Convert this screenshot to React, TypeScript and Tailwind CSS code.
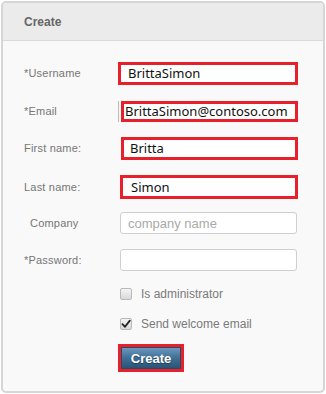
import React from "react";

const labelCls =
  "text-[11px] text-[#767676] leading-none tracking-[0.2px]";
const font = { fontFamily: '"Liberation Sans", Arial, sans-serif' };

function Label({ text, pl = "pl-[21px]" }: { text: string; pl?: string }) {
  return (
    <div className={`w-[115px] shrink-0 ${pl} ${labelCls}`} style={font}>
      {text}
    </div>
  );
}

function RedInput({ value, cls, textPl }: { value: string; cls: string; textPl: string }) {
  return (
    <div className={`border-[3px] border-[#e8202b] bg-white flex items-center overflow-hidden ${cls}`}>
      <span
        className={`${textPl} text-[13px] text-[#111] leading-none whitespace-nowrap`}
        style={{ fontFamily: '"Noto Sans", "Open Sans", sans-serif' }}
      >
        {value}
      </span>
    </div>
  );
}

function PlainInput({ placeholder }: { placeholder?: string }) {
  return (
    <div className="ml-[2px] w-[177px] h-[22px] rounded-[3px] border border-[#cfcfcf] bg-white flex items-center">
      {placeholder && (
        <span className="pl-[7px] text-[13px] text-[#a9a9a9] leading-none" style={{ fontFamily: '"Liberation Sans", Arial, sans-serif' }}>
          {placeholder}
        </span>
      )}
    </div>
  );
}

function Checkbox({ checked, label }: { checked?: boolean; label: string }) {
  return (
    <div className="flex items-center h-[12px]">
      <div className="w-[115px] shrink-0" />
      <div className="ml-[2px] w-[12px] h-[12px] rounded-[2px] border border-[#b9b9b9] bg-gradient-to-b from-[#f4f4f4] to-[#d9d9d9] flex items-center justify-center">
        {checked && (
          <svg width="10" height="10" viewBox="0 0 10 10">
            <path d="M1.5 5.2 L4 7.8 L8.8 1.6" fill="none" stroke="#222" strokeWidth="1.8" strokeLinecap="round" strokeLinejoin="round" />
          </svg>
        )}
      </div>
      <span className="ml-[9px] text-[12px] text-[#7a7a7a] leading-none" style={font}>
        {label}
      </span>
    </div>
  );
}

export default function App() {
  return (
    <div className="w-[326px] h-[394px] bg-white p-[1px]">
      <div className="w-[324px] h-[392px] border-2 border-[#d6d6d6] rounded-[5px] bg-[#f9f9f9] overflow-hidden flex flex-col">
        <div className="h-[38px] shrink-0 bg-[#ebebeb] border-b border-[#dadada] flex items-center pl-[21px]">
          <span className="text-[12px] font-bold text-[#666]" style={font}>
            Create
          </span>
        </div>
        <div className="flex flex-col">
          <div className="mt-[21px] flex items-center h-[23px]">
            <Label text="*Username" />
            <RedInput value="BrittaSimon" cls="w-[180px] h-[23px]" textPl="pl-[7px]" />
          </div>
          <div className="mt-[16px] flex items-center h-[21px]">
            <Label text="*Email" />
            <div className="w-[1px] h-[21px] bg-[#bbb] mr-[2px]" />
            <RedInput value="BrittaSimon@contoso.com" cls="w-[177px] h-[21px]" textPl="pl-[1px]" />
          </div>
          <div className="mt-[15px] flex items-center h-[23px]">
            <Label text="First name:" />
            <RedInput value="Britta" cls="ml-[3px] w-[177px] h-[23px]" textPl="pl-[6px]" />
          </div>
          <div className="mt-[15px] flex items-center h-[24px]">
            <Label text="Last name:" />
            <RedInput value="Simon" cls="ml-[2px] w-[178px] h-[24px]" textPl="pl-[8px]" />
          </div>
          <div className="mt-[13px] flex items-center h-[22px]">
            <Label text="Company" pl="pl-[27px]" />
            <PlainInput placeholder="company name" />
          </div>
          <div className="mt-[15px] flex items-center h-[22px]">
            <Label text="*Password:" />
            <PlainInput />
          </div>
          <div className="mt-[17px]">
            <Checkbox label="Is administrator" />
          </div>
          <div className="mt-[18px]">
            <Checkbox checked label="Send welcome email" />
          </div>
          <div className="mt-[14px] flex items-center h-[28px]">
            <div className="w-[115px] shrink-0" />
            <div className="w-[66px] h-[28px] border-[3px] border-[#e8202b]">
              <div className="w-full h-full border border-[#264c6b] bg-gradient-to-b from-[#6b98bd] via-[#3f6f96] to-[#2a5476] flex items-center justify-center">
                <span
                  className="text-[13px] font-bold text-white leading-none"
                  style={{ ...font, textShadow: "0 1px 1px rgba(0,0,0,0.4)" }}
                >
                  Create
                </span>
              </div>
            </div>
          </div>
        </div>
      </div>
    </div>
  );
}
